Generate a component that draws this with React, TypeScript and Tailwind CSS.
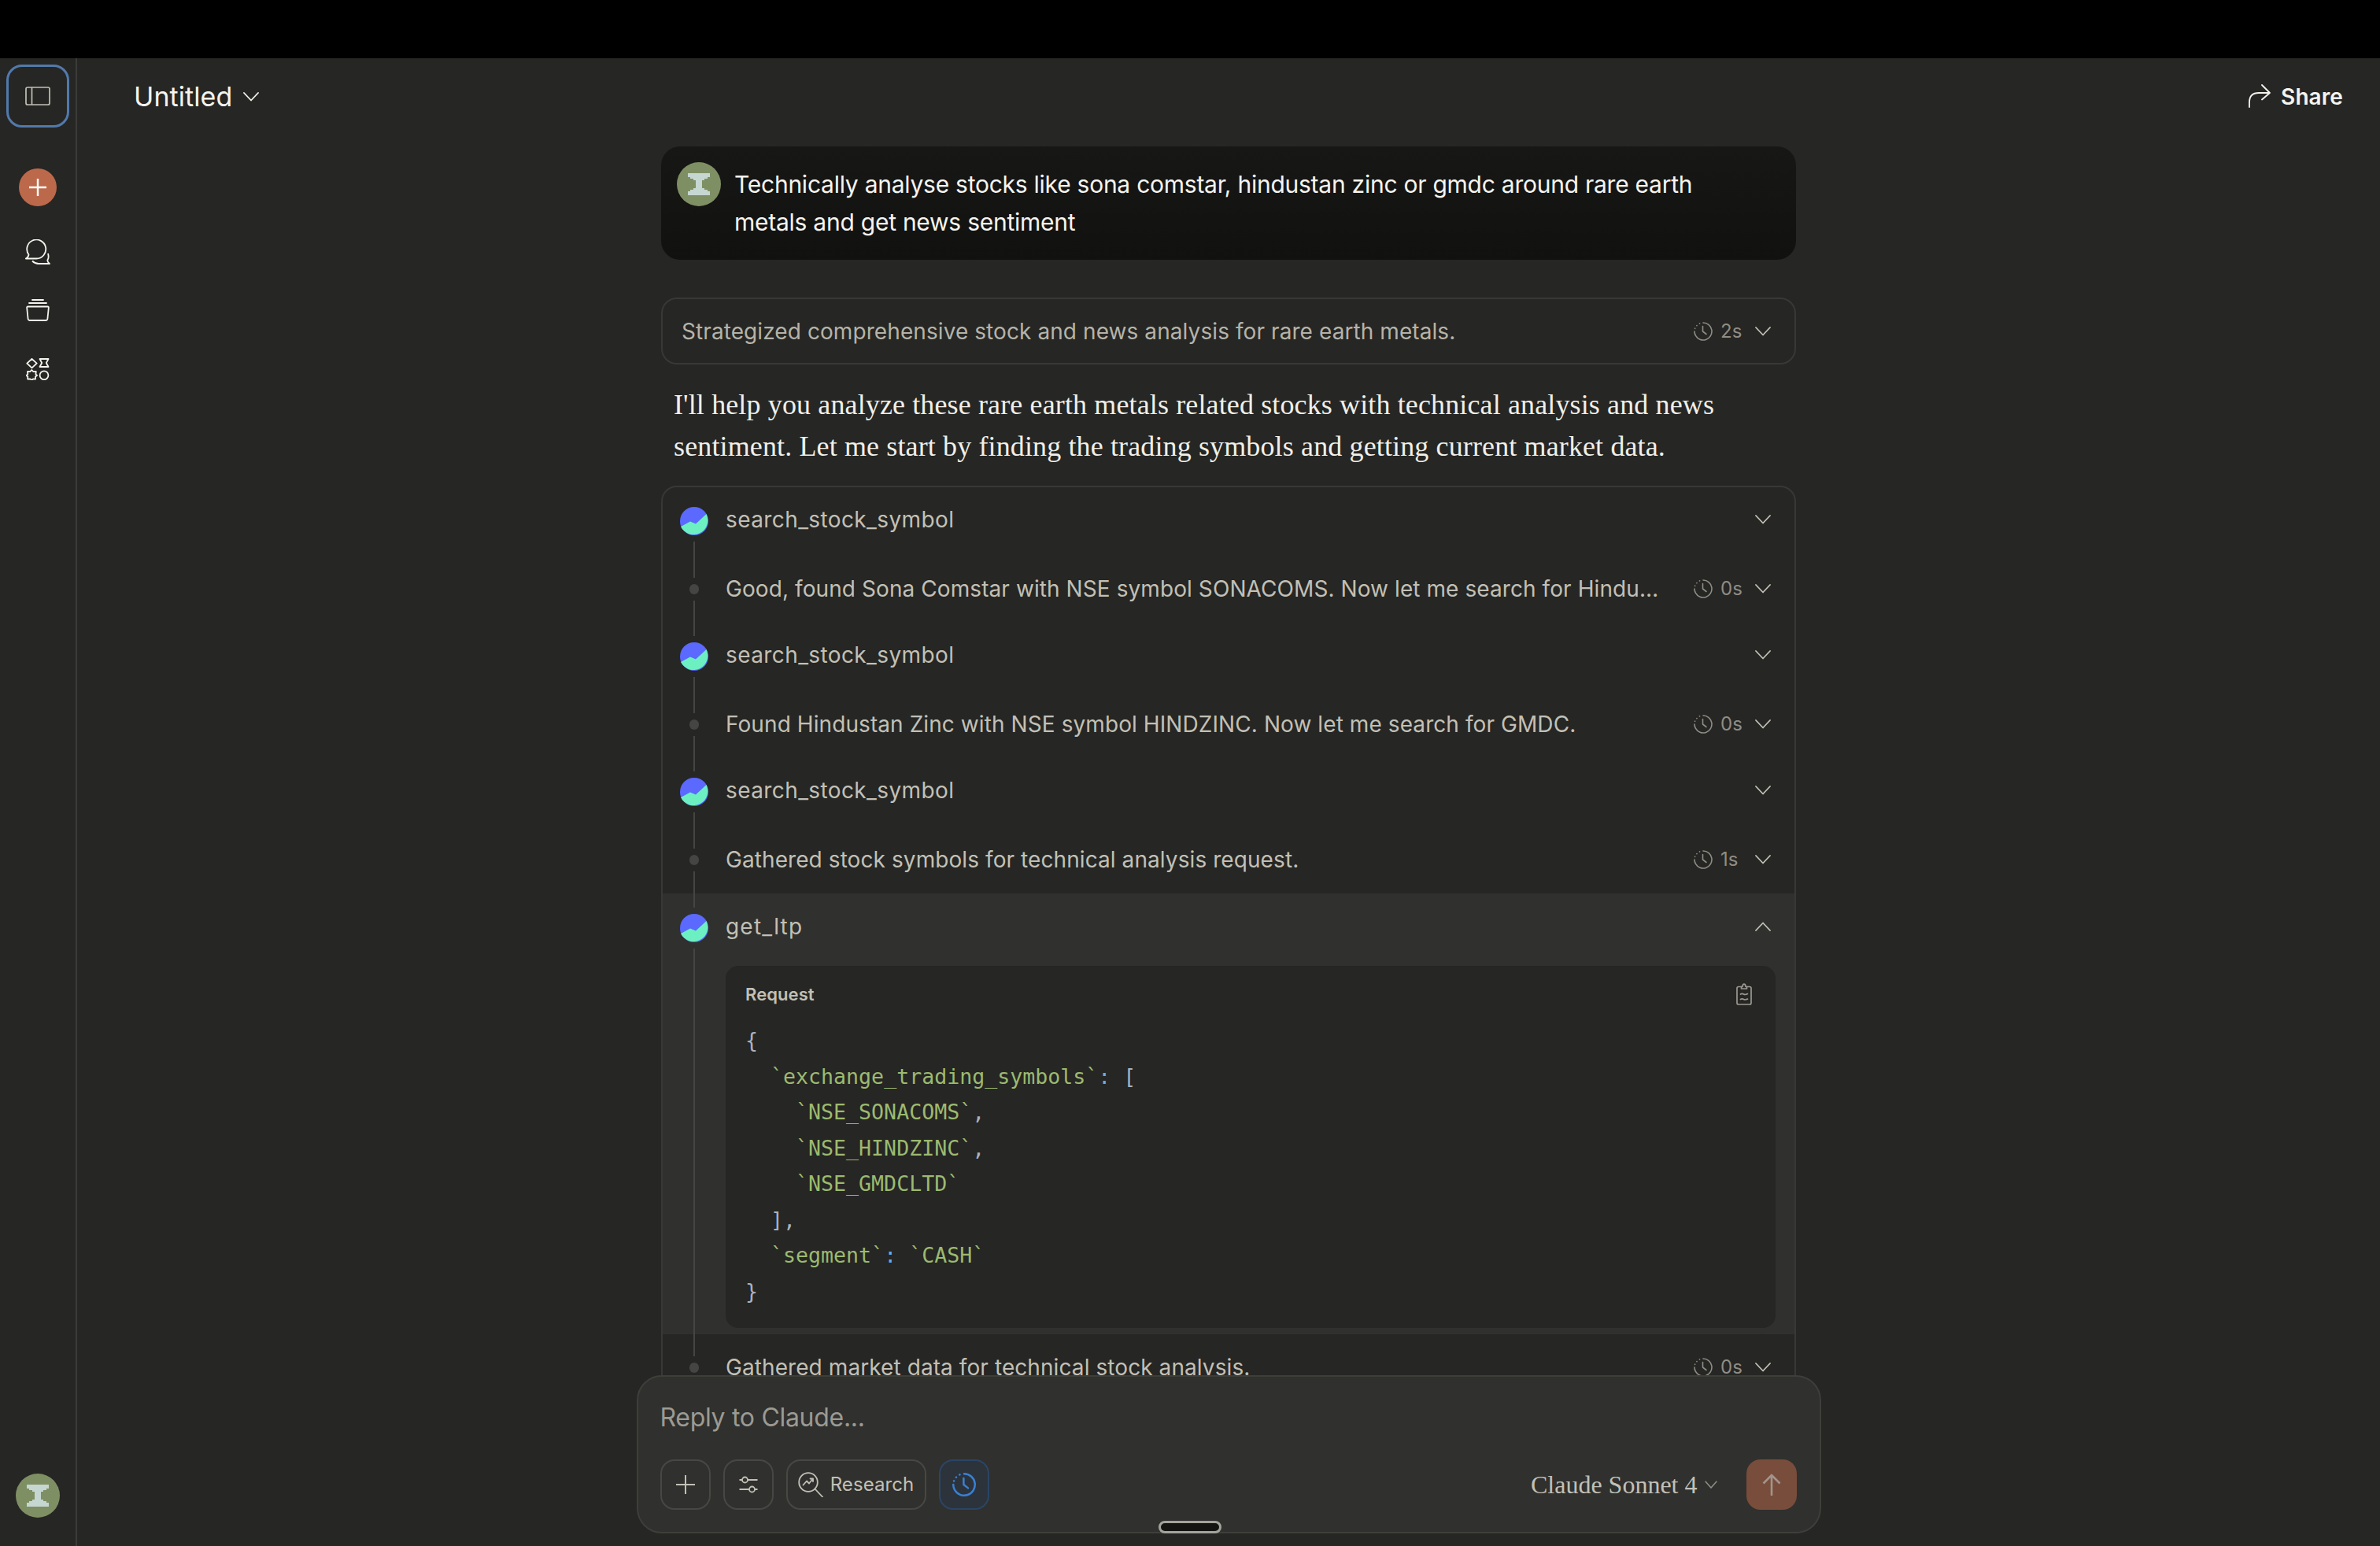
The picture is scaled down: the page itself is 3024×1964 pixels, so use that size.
import React from "react";

function Chevron({ up, className = "" }: { up?: boolean; className?: string }) {
  return (
    <svg viewBox="0 0 20 12" className={`w-[20px] h-[12px] ${className}`} fill="none" stroke="currentColor" strokeWidth="1.8" strokeLinecap="round" strokeLinejoin="round">
      <path d={up ? "M1 11 L10 1.5 L19 11" : "M1 1 L10 10.5 L19 1"} />
    </svg>
  );
}

function ClockDash({ className = "", strokeWidth = 1.6 }: { className?: string; strokeWidth?: number }) {
  return (
    <svg viewBox="0 0 24 24" className={className} fill="none" stroke="currentColor" strokeWidth={strokeWidth} strokeLinecap="round" strokeLinejoin="round">
      <path d="M12 1 A11 11 0 1 1 2.3 17.2 A11 11 0 0 1 1 12" />
      <path d="M1.6 8.4 L1.7 8.2 M3.9 4.6 L4 4.5 M7.4 2 L7.6 1.9" />
      <path d="M11.5 5.5 V12 L16 15.5" />
    </svg>
  );
}

function StockIcon() {
  return (
    <svg viewBox="0 0 36 36" className="w-[36px] h-[36px] shrink-0">
      <circle cx="18" cy="18" r="18" fill="#5b69ff" />
      <path d="M1 25 L13 18.5 L20 21.5 L33.5 9 A18 18 0 1 1 1 25 Z" fill="#6cf0c2" />
    </svg>
  );
}

function Hourglass({ className = "" }: { className?: string }) {
  return (
    <div className={`rounded-full bg-[#7f8f64] flex items-center justify-center shrink-0 ${className}`}>
      <svg viewBox="0 0 28 28" className="w-[28px] h-[28px]" fill="#c6d6d0">
        <path d="M0 0 H28 V5 H25 V7 H21 V9 H18 V19 H21 V21 H25 V23 H28 V28 H0 V23 H3 V21 H7 V19 H10 V9 H7 V7 H3 V5 H0 Z" />
      </svg>
    </div>
  );
}

function Timeline({ dot, top = true }: { dot?: boolean; top?: boolean }) {
  return (
    <div className="w-[36px] shrink-0 h-full flex flex-col items-center gap-[8px]">
      <div className={`w-[2px] flex-1 ${top ? "bg-[#454543]" : ""}`} />
      {dot ? <div className="w-[12px] h-[13px] rounded-full bg-[#454543]" /> : <StockIcon />}
      <div className="w-[2px] flex-1 bg-[#454543]" />
    </div>
  );
}

function Meta({ time }: { time?: string }) {
  return (
    <div className="flex items-center shrink-0 text-[#8f8d85]">
      {time && (
        <>
          <ClockDash className="w-[24px] h-[24px]" />
          <span className="ml-[10px] w-[34px] text-[24px] leading-none">{time}</span>
        </>
      )}
      <span className="ml-[10px] text-[#c2c0b6]">
        <Chevron />
      </span>
    </div>
  );
}

function ToolRow({ name, first }: { name: string; first?: boolean }) {
  return (
    <div className="h-[86px] flex pl-[22px] pr-[30px]">
      <Timeline top={!first} />
      <div className="flex-1 flex items-center justify-between pl-[22px] pb-[5px]">
        <span className="text-[28px] tracking-[0.4px] text-[#c2c0b6]">{name}</span>
        <Meta />
      </div>
    </div>
  );
}

function NoteRow({ text, time, className = "h-[86px]" }: { text: string; time: string; className?: string }) {
  return (
    <div className={`flex pl-[22px] pr-[30px] ${className}`}>
      <Timeline dot />
      <div className="flex-1 min-w-0 flex items-center justify-between pl-[22px]">
        <span className="text-[28px] text-[#c2c0b6] truncate max-w-[1191px]">{text}</span>
        <Meta time={time} />
      </div>
    </div>
  );
}

const g = "text-[#9cba70]";
const p = "text-[#abb2bf]";
const c = "text-[#61afef]";

function CodeBlock() {
  return (
    <pre className="font-['DejaVu_Sans_Mono',monospace] text-[26.6px] leading-[45.5px] tracking-normal text-[#abb2bf] mt-[20px]">
      <div>{"{"}</div>
      <div>
        {"  "}
        <span className={g}>`exchange_trading_symbols`</span>
        <span className={c}>:</span> <span className={p}>[</span>
      </div>
      <div>
        {"    "}
        <span className={g}>`NSE_SONACOMS`</span>,
      </div>
      <div>
        {"    "}
        <span className={g}>`NSE_HINDZINC`</span>,
      </div>
      <div>
        {"    "}
        <span className={g}>`NSE_GMDCLTD`</span>
      </div>
      <div>{"  ],"}</div>
      <div>
        {"  "}
        <span className={g}>`segment`</span>
        <span className={c}>:</span> <span className={g}>`CASH`</span>
      </div>
      <div>{"}"}</div>
    </pre>
  );
}

function ExpandedRow() {
  return (
    <div className="flex pl-[22px] pr-[24px] h-[560px] bg-[#30302e]">
      <div className="w-[36px] shrink-0 h-full flex flex-col items-center gap-[8px]">
        <div className="w-[2px] h-[18px] bg-[#454543]" />
        <StockIcon />
        <div className="w-[2px] flex-1 bg-[#454543]" />
      </div>
      <div className="flex-1 pl-[22px] flex flex-col">
        <div className="h-[92px] flex items-center justify-between pr-[6px] pb-[8px]">
          <span className="text-[28px] tracking-[1.2px] text-[#c2c0b6]">get_ltp</span>
          <span className="text-[#c2c0b6]">
            <Chevron up />
          </span>
        </div>
        <div className="h-[460px] bg-[#262624] rounded-[16px] pl-[25px] pr-[30px] pt-[20px]">
          <div className="flex items-center justify-between h-[32px]">
            <span className="text-[22px] font-semibold text-[#c2c0b6]">Request</span>
            <svg viewBox="0 0 20 28" className="w-[20px] h-[28px] text-[#9b998f]" fill="none" stroke="currentColor" strokeWidth="1.7" strokeLinecap="round" strokeLinejoin="round">
              <path d="M6.5 4.5 H3 Q1 4.5 1 6.5 V25 Q1 27 3 27 H17 Q19 27 19 25 V6.5 Q19 4.5 17 4.5 H13.5" />
              <path d="M6.5 7 V4.5 H8 Q8.2 1.2 10 1.2 Q11.8 1.2 12 4.5 H13.5 V7 Z" />
              <path d="M5.5 14 Q7.5 12.8 9.5 14 T14.5 13.6 M5.5 20.5 Q7.5 19.3 9.5 20.5 T14.5 20.1" />
            </svg>
          </div>
          <CodeBlock />
        </div>
      </div>
    </div>
  );
}

function ToolButton({ children, className = "" }: { children: React.ReactNode; className?: string }) {
  return (
    <div className={`h-[64px] rounded-[18px] border-2 flex items-center justify-center ${className}`}>{children}</div>
  );
}

function Composer() {
  return (
    <div className="relative w-[1505px] h-[201px] mx-auto bg-[#30302e] border-2 border-[#3e3e3b] rounded-[32px] pl-[28px] pr-[29px] pt-[28px]">
      <div className="text-[32px] leading-[48px] tracking-[-0.3px] text-[#9c9a92]">Reply to Claude...</div>
      <div className="flex items-center mt-[29px] justify-between">
        <div className="flex items-center gap-[16px]">
          <ToolButton className="w-[64px] border-[#474744] text-[#c2c0b6]">
            <svg viewBox="0 0 24 24" className="w-[24px] h-[24px]" stroke="currentColor" strokeWidth="2">
              <path d="M12 0 V24 M0 12 H24" />
            </svg>
          </ToolButton>
          <ToolButton className="w-[64px] border-[#474744] text-[#c2c0b6]">
            <svg viewBox="0 0 24 24" className="w-[24px] h-[24px]" fill="none" stroke="currentColor" strokeWidth="1.8">
              <path d="M0.5 6 H4 M11 6 H23.5 M0.5 18 H13 M20 18 H23.5" />
              <circle cx="7.5" cy="6" r="3.5" />
              <circle cx="16.5" cy="18" r="3.5" />
            </svg>
          </ToolButton>
          <ToolButton className="w-[178px] border-[#474744] text-[#c2c0b6] gap-[9px]">
            <svg viewBox="0 0 32 32" className="w-[32px] h-[32px]" fill="none" stroke="currentColor" strokeWidth="1.8" strokeLinecap="round" strokeLinejoin="round">
              <circle cx="13" cy="13" r="11.8" />
              <path d="M21.5 21.5 L31 31.5" />
              <path d="M6.5 16.5 L11 11.5 L14 14.5 L19 8.5 M15.5 8.5 H19 V12" />
            </svg>
            <span className="text-[24px]">Research</span>
          </ToolButton>
          <ToolButton className="w-[64px] border-[#2b4566] bg-[#2d333b] text-[#3a80d2]">
            <ClockDash className="w-[30px] h-[30px]" strokeWidth={2} />
          </ToolButton>
        </div>
        <div className="flex items-center">
          <span className="font-['Liberation_Serif',serif] text-[32px] tracking-normal text-[#c2c0b6]">Claude Sonnet 4</span>
          <span className="ml-[9px] text-[#918f87]">
            <svg viewBox="0 0 16 10" className="w-[16px] h-[10px]" fill="none" stroke="currentColor" strokeWidth="1.5">
              <path d="M0.7 0.7 L8 9 L15.3 0.7" />
            </svg>
          </span>
          <div className="ml-[37px] w-[64px] h-[64px] rounded-[18px] bg-[#784d3b] flex items-center justify-center text-[#a0958d]">
            <svg viewBox="0 0 24 28" className="w-[24px] h-[28px]" fill="none" stroke="currentColor" strokeWidth="2.6" strokeLinejoin="round">
              <path d="M12 28 V2 M1.5 12.5 L12 2 L22.5 12.5" />
            </svg>
          </div>
        </div>
      </div>
      <div className="absolute left-[661px] bottom-[-2px] w-[80px] h-[16px] rounded-full bg-[#141413] border-[3px] border-[#a3a39d]" />
    </div>
  );
}

export default function App() {
  return (
    <div className="h-screen w-full flex flex-col overflow-hidden bg-[#262624] font-[Inter,sans-serif] tracking-[0.08px]">
      <div className="h-[74px] shrink-0 bg-black" />
      <div className="flex-1 min-h-0 flex">
        <aside className="w-[98px] shrink-0 border-r-2 border-[#3b3b39] flex flex-col items-center text-[#f5f4ef]">
          <div className="mt-[8px] w-[80px] h-[80px] rounded-[20px] border-[3px] border-[#5279ab] flex items-center justify-center text-[#c2c0b6]">
            <svg viewBox="0 0 32 24" className="w-[32px] h-[24px]" fill="none" stroke="currentColor" strokeWidth="1.7">
              <rect x="1" y="1" width="30" height="22" rx="2" />
              <path d="M8.5 1 V23" />
            </svg>
          </div>
          <div className="mt-[52px] w-[48px] h-[48px] rounded-full bg-[#bc694b] flex items-center justify-center text-white">
            <svg viewBox="0 0 24 24" className="w-[24px] h-[24px]" stroke="currentColor" strokeWidth="2.4">
              <path d="M12 1 V23 M1 12 H23" />
            </svg>
          </div>
          <svg viewBox="0 0 32 32" className="mt-[42px] w-[32px] h-[32px]" fill="none" stroke="currentColor" strokeWidth="1.8" strokeLinejoin="round">
            <path d="M4.5 19.5 A12 12 0 1 1 14 24.5 H0.8 Q3.8 23.3 4.5 19.5 Z" />
            <path d="M9 27.5 Q12.5 31 17 31 H31 Q28.2 29 28.3 26.5 Q30.5 23.5 29 18" />
          </svg>
          <svg viewBox="0 0 30 28" className="mt-[44px] w-[30px] h-[28px]" fill="none" stroke="currentColor" strokeWidth="1.8" strokeLinejoin="round" strokeLinecap="round">
            <path d="M8 1 H22 M4 5 H26" />
            <path d="M2.5 9.5 H27.5 Q29 9.5 28.8 11 L27.4 25 Q27.2 27 25 27 H5 Q2.8 27 2.6 25 L1.2 11 Q1 9.5 2.5 9.5 Z" />
          </svg>
          <svg viewBox="0 0 30 28" className="mt-[47px] w-[30px] h-[28px]" fill="none" stroke="currentColor" strokeWidth="1.8" strokeLinejoin="round">
            <path d="M7.5 0.8 L13.7 6.6 L7.5 12.4 L1.3 6.6 Z" />
            <path d="M17.5 1 H28.5 L25.8 6 L28.5 11 H17.5 L20.2 6 Z" />
            <path d="M7.3 15 L9.4 17.2 L12.8 17 L12.4 20.4 L14 22 L12 23.5 L12 26.7 L9 26.3 L7.3 28 L5.4 26.3 L2.2 26.7 L2.3 23.5 L0.5 22 L2.3 20.3 L2 17 L5.2 17.2 Z" />
            <circle cx="23" cy="21.7" r="5.4" />
          </svg>
          <Hourglass className="mt-auto mb-[36px] w-[56px] h-[56px]" />
        </aside>

        <main className="flex-1 min-w-0 flex flex-col">
          <header className="h-[98px] shrink-0 flex items-center justify-between pl-[72px] pr-[47px]">
            <div className="flex items-center text-[#f5f4ef]">
              <span className="text-[34px] mb-[2px]">Untitled</span>
              <Chevron className="ml-[14px]" />
            </div>
            <div className="flex items-center text-[#f5f4ef]">
              <svg viewBox="0 0 28 30" className="w-[28px] h-[30px] mb-[2px]" fill="none" stroke="currentColor" strokeWidth="1.8" strokeLinecap="round" strokeLinejoin="round">
                <path d="M1 29 V23 Q1 11 13 11 H27 M17 1 L27 11 L17 19.5" />
              </svg>
              <span className="ml-[13px] text-[28px] font-semibold">Share</span>
            </div>
          </header>

          <div className="flex-1 min-h-0 overflow-hidden">
            <div className="w-[1442px] mx-auto pt-[14px]">
              <div className="h-[144px] rounded-[24px] bg-gradient-to-b from-[#171716] to-[#111110] pl-[20px] pr-[40px] pt-[20px] flex gap-[17px]">
                <Hourglass className="w-[56px] h-[56px]" />
                <p className="text-[30px] leading-[48px] tracking-[-0.25px] text-[#f5f4ef] pt-[4px]">
                  Technically analyse stocks like sona comstar, hindustan zinc or gmdc around rare earth metals and get news sentiment
                </p>
              </div>

              <div className="mt-[48px] h-[85px] border-2 border-[#383836] rounded-[20px] flex items-center justify-between pl-[24px] pr-[30px] text-[#c2c0b6]">
                <span className="text-[28px] text-[#b5b3a9]">Strategized comprehensive stock and news analysis for rare earth metals.</span>
                <Meta time="2s" />
              </div>

              <p className="mt-[25px] pl-[16px] pr-[60px] font-['Liberation_Serif',serif] text-[36px] leading-[53px] tracking-[0.13px] text-[#f0efe9]">
                I'll help you analyze these rare earth metals related stocks with technical analysis and news sentiment. Let me start by finding the trading symbols and getting current market data.
              </p>

              <div className="mt-[23px] border-2 border-[#383836] rounded-t-[20px] overflow-hidden">
                <ToolRow name="search_stock_symbol" first />
                <NoteRow text="Good, found Sona Comstar with NSE symbol SONACOMS. Now let me search for Hindustan Zinc." time="0s" />
                <ToolRow name="search_stock_symbol" />
                <NoteRow text="Found Hindustan Zinc with NSE symbol HINDZINC. Now let me search for GMDC." time="0s" />
                <ToolRow name="search_stock_symbol" />
                <NoteRow text="Gathered stock symbols for technical analysis request." time="1s" />
                <ExpandedRow />
                <NoteRow text="Gathered market data for technical stock analysis." time="0s" className="h-[84px]" />
              </div>
            </div>
          </div>

          <div className="shrink-0 pb-[16px]">
            <Composer />
          </div>
        </main>
      </div>
    </div>
  );
}
